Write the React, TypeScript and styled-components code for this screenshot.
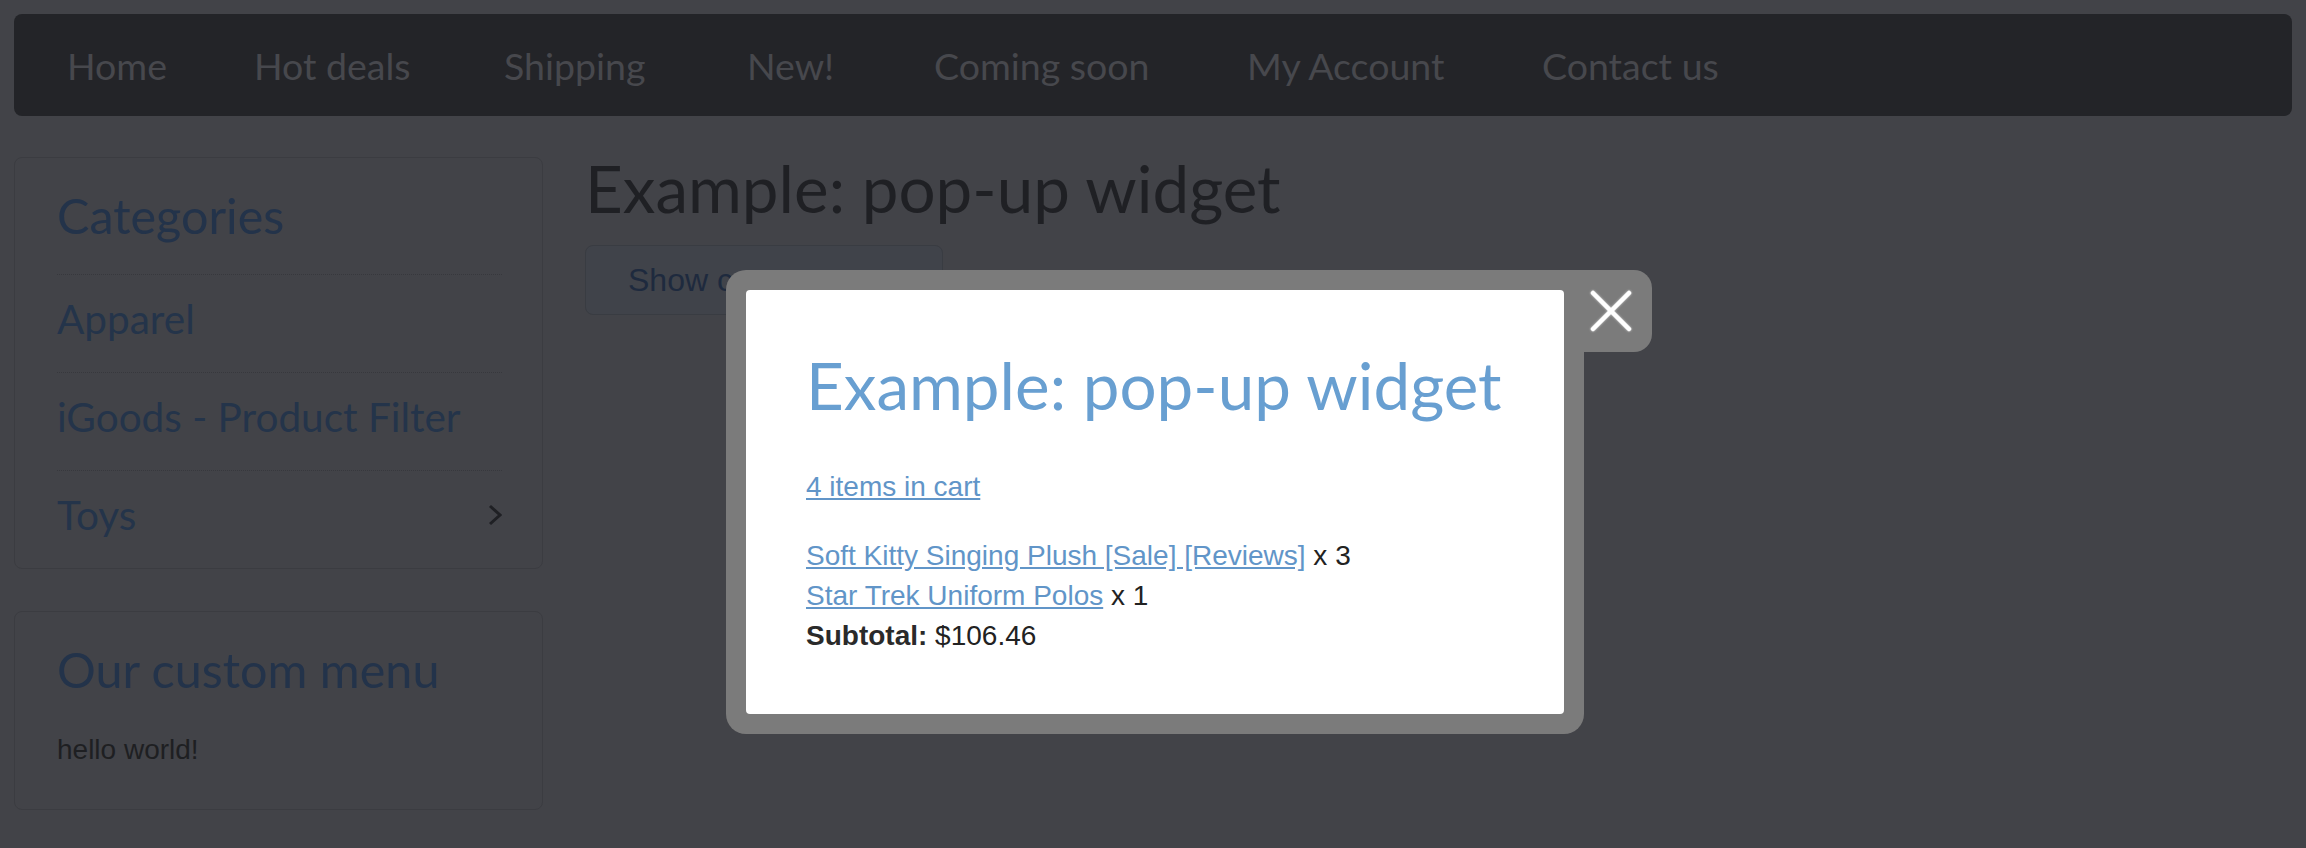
import React from "react";
import styled, { createGlobalStyle } from "styled-components";

const GlobalStyle = createGlobalStyle`
  html, body { margin: 0; padding: 0; }
  body {
    width: 2306px;
    height: 848px;
    overflow: hidden;
    background: #424348;
    font-family: "Liberation Sans", Arial, sans-serif;
    font-size: 28px;
    line-height: 40px;
    color: #1e1f22;
  }
  * { box-sizing: border-box; }
`;

const HEAD_FONT = `Lato, "Open Sans", sans-serif`;

const Page = styled.div`
  padding: 14px;
  display: flex;
  flex-direction: column;
`;

const NavBar = styled.nav`
  height: 102px;
  background: #232428;
  border-radius: 8px;
  display: flex;
  align-items: center;
  padding-left: 53px;
`;

const NavLink = styled.a<{ $w?: number }>`
  flex: none;
  width: ${(p) => (p.$w ? `${p.$w}px` : "auto")};
  font-family: ${HEAD_FONT};
  font-size: 37.5px;
  line-height: 47px;
  color: #47484d;
  text-decoration: none;
  white-space: nowrap;
`;

const Body = styled.div`
  display: grid;
  grid-template-columns: 529px 1fr;
  column-gap: 42px;
  margin-top: 41px;
`;

const Sidebar = styled.aside`
  display: flex;
  flex-direction: column;
  gap: 42px;
`;

const Box = styled.section`
  border: 1px solid #3b3c41;
  border-radius: 8px;
  padding: 0 40px 0 42px;
`;

const BoxTitle = styled.h3`
  margin: 0;
  padding: 29px 0 31px;
  font-family: ${HEAD_FONT};
  font-weight: 400;
  font-size: 48.5px;
  line-height: 56px;
  color: #23334a;
`;

const CatRow = styled.div`
  border-top: 1px dotted #37383d;
  padding: 20px 0 30px;
  display: flex;
  justify-content: space-between;
  align-items: flex-start;
  font-family: ${HEAD_FONT};
  font-size: 40.5px;
  line-height: 47px;
  color: #24344a;
`;

const Chevron = styled.svg`
  flex: none;
  margin-top: 13px;
`;

const BoxText = styled.p`
  margin: 0;
  padding: 2px 0 39px;
  color: #1e1f22;
`;

const Main = styled.main`
  display: flex;
  flex-direction: column;
  align-items: flex-start;
`;

const MainHeading = styled.h1`
  margin: 0;
  font-family: ${HEAD_FONT};
  font-weight: 400;
  font-size: 65.5px;
  line-height: 62px;
  color: #1f2024;
`;

const ShowButton = styled.button`
  margin-top: 26px;
  height: 70px;
  padding: 0 42px;
  border: 1px solid #393c42;
  border-radius: 8px;
  background: #40434a;
  font-family: "Liberation Sans", Arial, sans-serif;
  font-size: 32px;
  color: #1e2a3e;
`;

const Backdrop = styled.div`
  position: fixed;
  inset: 0;
`;

const ModalFrame = styled.div`
  position: absolute;
  left: 726px;
  top: 270px;
  width: 858px;
  padding: 20px;
  background: #7b7b7b;
  border-radius: 20px 0 20px 20px;
`;

const CloseTab = styled.button`
  position: absolute;
  top: 0;
  left: 100%;
  width: 68px;
  height: 82px;
  border: none;
  margin: 0;
  padding: 20px 0 0 6px;
  background: #7b7b7b;
  border-radius: 0 18px 18px 0;
  display: flex;
  align-items: flex-start;
  justify-content: flex-start;
`;

const CloseIcon = styled.svg`
  filter: drop-shadow(0 0 1px rgba(255, 255, 255, 0.7));
`;

const ModalContent = styled.div`
  background: #ffffff;
  border-radius: 4px;
  padding: 60px 60px 58px;
`;

const ModalTitle = styled.h2`
  margin: 0 0 47px;
  font-family: ${HEAD_FONT};
  font-weight: 400;
  font-size: 65.5px;
  line-height: 70px;
  color: #689fd1;
`;

const Para = styled.p<{ $gap?: number }>`
  margin: 0 0 ${(p) => p.$gap ?? 0}px;
  color: #222222;
`;

const Link = styled.a`
  color: #6195c8;
  text-decoration: underline;
`;

const Strong = styled.strong`
  color: #2a2a2a;
`;

const navItems: { label: string; w?: number }[] = [
  { label: "Home", w: 187 },
  { label: "Hot deals", w: 250 },
  { label: "Shipping", w: 243 },
  { label: "New!", w: 187 },
  { label: "Coming soon", w: 313 },
  { label: "My Account", w: 295 },
  { label: "Contact us" },
];

const categories = ["Apparel", "iGoods - Product Filter", "Toys"];

export default function App() {
  return (
    <>
      <GlobalStyle />
      <Page>
        <NavBar>
          {navItems.map((n) => (
            <NavLink key={n.label} href="#" $w={n.w}>
              {n.label}
            </NavLink>
          ))}
        </NavBar>
        <Body>
          <Sidebar>
            <Box>
              <BoxTitle>Categories</BoxTitle>
              {categories.map((c) => (
                <CatRow key={c}>
                  <span>{c}</span>
                  {c === "Toys" && (
                    <Chevron width="14" height="22" viewBox="0 0 14 22">
                      <polyline
                        points="2,2 12,11 2,20"
                        fill="none"
                        stroke="#1f2024"
                        strokeWidth="3"
                      />
                    </Chevron>
                  )}
                </CatRow>
              ))}
            </Box>
            <Box>
              <BoxTitle>Our custom menu</BoxTitle>
              <BoxText>hello world!</BoxText>
            </Box>
          </Sidebar>
          <Main>
            <MainHeading>Example: pop-up widget</MainHeading>
            <ShowButton>Show cart contents</ShowButton>
          </Main>
        </Body>
      </Page>
      <Backdrop>
        <ModalFrame>
          <CloseTab aria-label="Close">
            <CloseIcon width="42" height="42" viewBox="0 0 42 42">
              <line x1="3" y1="3" x2="39" y2="39" stroke="#fff" strokeWidth="4.5" strokeLinecap="round" />
              <line x1="39" y1="3" x2="3" y2="39" stroke="#fff" strokeWidth="4.5" strokeLinecap="round" />
            </CloseIcon>
          </CloseTab>
          <ModalContent>
            <ModalTitle>Example: pop-up widget</ModalTitle>
            <Para $gap={29}>
              <Link href="#">4 items in cart</Link>
            </Para>
            <Para>
              <Link href="#">Soft Kitty Singing Plush [Sale] [Reviews]</Link> x 3
              <br />
              <Link href="#">Star Trek Uniform Polos</Link> x 1
              <br />
              <Strong>Subtotal:</Strong> $106.46
            </Para>
          </ModalContent>
        </ModalFrame>
      </Backdrop>
    </>
  );
}
